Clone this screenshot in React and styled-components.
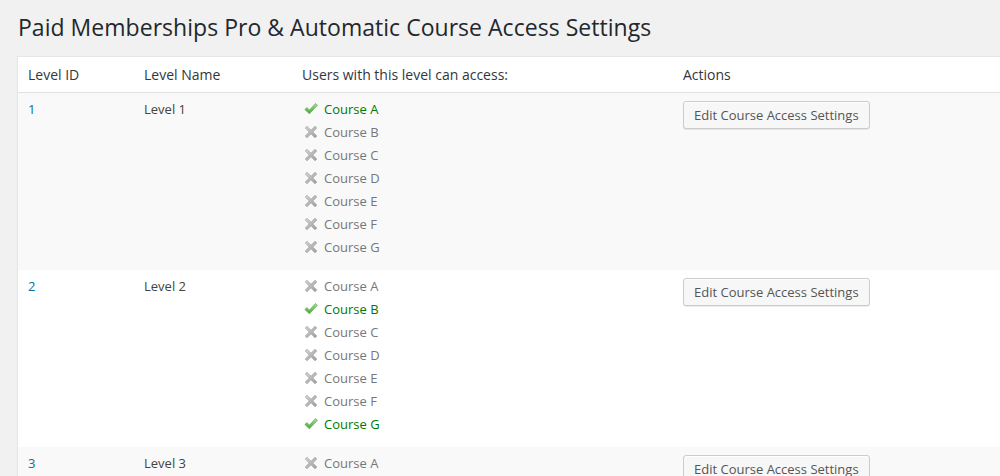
import React from 'react'
import styled, { createGlobalStyle } from 'styled-components'

const GlobalStyle = createGlobalStyle`
body {
  margin: 0;
  background: #f1f1f1;
  font-family: "Open Sans", "Liberation Sans", sans-serif;
  color: #444;
  overflow: hidden;
}
`;

const Wrap = styled.div`
padding: 0 0 0 17px;
`;

const Title = styled.h2`
margin: 0;
padding: 12px 0 14px 1px;
font-size: 23px;
font-weight: 400;
line-height: 30px;
letter-spacing: 0.03px;
color: #23282d;
white-space: nowrap;
`;

const Table = styled.table`
width: 1000px;
border-collapse: collapse;
background: #fff;
border: 1px solid #e5e5e5;
box-shadow: 0 1px 1px rgba(0,0,0,.04);
table-layout: fixed;
`;

const Th = styled.th`
text-align: left;
font-weight: 400;
font-size: 14px;
line-height: 19px;
color: #32373c;
padding: 8px 10px;
border-bottom: 1px solid #e1e1e1;
width: ${p => p.w ? p.w + 'px' : 'auto'};
`;

const Tr = styled.tr`
background: ${p => p.alt ? '#f9f9f9' : '#fff'};
`;

const Td = styled.td`
vertical-align: top;
padding: 8px 10px 8px;
font-size: 13px;
line-height: 16px;
color: ${p => p.link ? '#0073aa' : '#444'};
`;

const CourseList = styled.ul`
list-style: none;
margin: 0;
padding: 0 0 0 2px;
`;

const CourseItem = styled.li`
display: flex;
align-items: center;
gap: 6px;
height: 16px;
margin-bottom: 7px;
color: ${p => p.on ? '#007a00' : '#777'};
`;

const Button = styled.button`
font-family: "Open Sans", "Liberation Sans", sans-serif;
font-size: 13px;
height: 28px;
line-height: 26px;
padding: 0 10px 1px;
border: 1px solid #ccc;
border-radius: 3px;
background: #f7f7f7;
color: #555;
box-shadow: inset 0 1px 0 #fff, 0 1px 0 rgba(0,0,0,.08);
white-space: nowrap;
cursor: pointer;
`;

const Check = () => (
  <svg width="14" height="14" viewBox="0 0 14 14">
    <defs>
      <linearGradient id="cg" x1="0" y1="0" x2="0" y2="1">
        <stop offset="0" stopColor="#a6de96" />
        <stop offset="1" stopColor="#4aa63a" />
      </linearGradient>
    </defs>
    <path d="M0.8 7.6 L2.9 5.6 L5.4 8 L11.6 1.4 L13.5 3.3 L5.4 11.8 Z" fill="url(#cg)" stroke="#55a545" strokeWidth="0.6" strokeLinejoin="round" />
  </svg>
)

const Cross = () => (
  <svg width="14" height="14" viewBox="0 0 14 14">
    <defs>
      <linearGradient id="xg" x1="0" y1="0" x2="1" y2="1">
        <stop offset="0" stopColor="#d4d4d4" />
        <stop offset="1" stopColor="#9a9a9a" />
      </linearGradient>
    </defs>
    <path d="M3 1 L7 5 L11 1 L13 3 L9 7 L13 11 L11 13 L7 9 L3 13 L1 11 L5 7 L1 3 Z" fill="url(#xg)" stroke="#a9a9a9" strokeWidth="0.5" strokeLinejoin="round" />
  </svg>
)

const courses = ['A', 'B', 'C', 'D', 'E', 'F', 'G']

const levels = [
  { id: 1, name: 'Level 1', access: ['A'] },
  { id: 2, name: 'Level 2', access: ['B', 'G'] },
  { id: 3, name: 'Level 3', access: [] },
]

const App = () => {
  return (
    <Wrap>
      <GlobalStyle />
      <Title>Paid Memberships Pro &amp; Automatic Course Access Settings</Title>
      <Table>
        <thead>
          <tr>
            <Th w={96}>Level ID</Th>
            <Th w={138}>Level Name</Th>
            <Th w={361}>Users with this level can access:</Th>
            <Th>Actions</Th>
          </tr>
        </thead>
        <tbody>
          {levels.map((lvl, i) => (
            <Tr key={lvl.id} alt={i % 2 === 0}>
              <Td link>{lvl.id}</Td>
              <Td>{lvl.name}</Td>
              <Td>
                <CourseList>
                  {courses.map(c => {
                    const on = lvl.access.includes(c)
                    return (
                      <CourseItem key={c} on={on}>
                        {on ? <Check /> : <Cross />}
                        Course {c}
                      </CourseItem>
                    )
                  })}
                </CourseList>
              </Td>
              <Td>
                <Button>Edit Course Access Settings</Button>
              </Td>
            </Tr>
          ))}
        </tbody>
      </Table>
    </Wrap>
  )
}

export default App
